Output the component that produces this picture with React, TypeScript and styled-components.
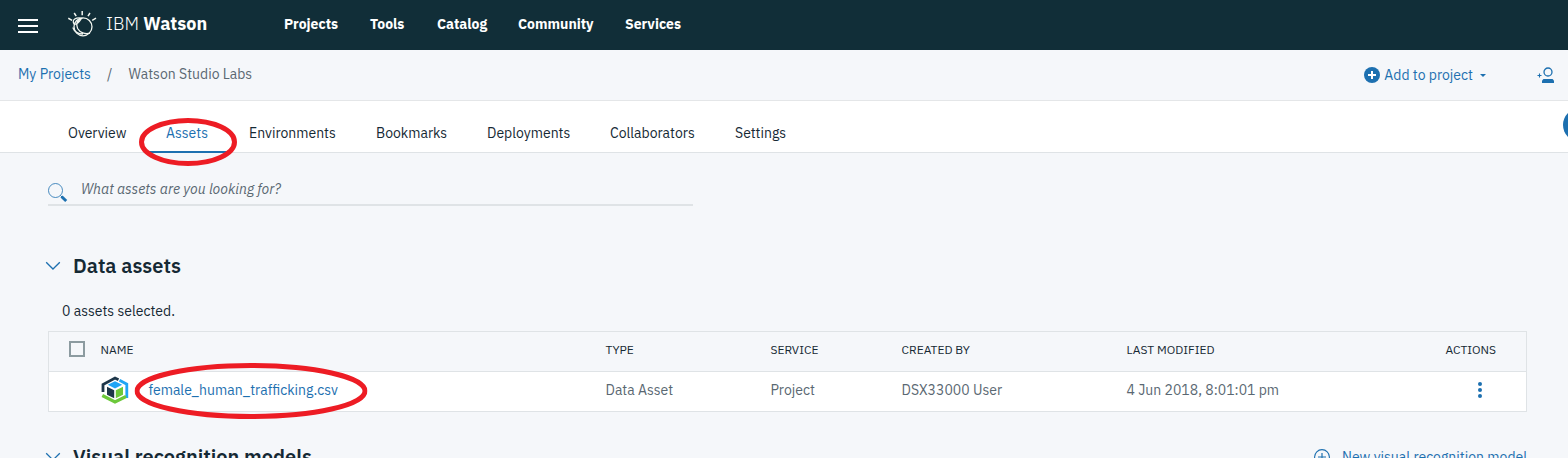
import React from 'react';
import styled, { createGlobalStyle } from 'styled-components';

const color = {
  header: '#112e38',
  page: '#f5f7fa',
  white: '#ffffff',
  ink: '#152934',
  muted: '#5a6872',
  link: '#1d70b0',
  line: '#dfe3e6',
  mark: '#ed1c24',
};

const GlobalStyle = createGlobalStyle`
  *, *::before, *::after { box-sizing: border-box; }
  body {
    margin: 0;
    background: ${color.page};
    color: ${color.ink};
    font-family: 'IBM Plex Sans', Roboto, 'Liberation Sans', sans-serif;
    font-size: 14px;
    line-height: 20px;
  }
  button, input { font: inherit; color: inherit; }
  a { text-decoration: none; color: inherit; }
`;

const Page = styled.div`
  position: relative;
  height: 100vh;
  overflow: hidden;
`;

const Header = styled.header`
  display: flex;
  align-items: center;
  height: 50px;
  padding: 0 18px 2px;
  background: ${color.header};
  color: ${color.white};
`;

const IconButton = styled.button`
  display: flex;
  align-items: center;
  justify-content: center;
  padding: 0;
  border: 0;
  background: none;
  color: inherit;
  cursor: pointer;
`;

const MenuButton = styled(IconButton)`
  width: 20px;
  height: 16px;
  margin: 4px 30px 0 0;
`;

const Brand = styled.a`
  display: flex;
  align-items: center;
  gap: 9px;
  width: 216px;
  font-size: 18px;
  font-weight: 300;
  line-height: 24px;

  strong { font-weight: 700; }
`;

const MainNav = styled.nav`
  display: flex;
`;

const NavLink = styled.a<{ $width: number }>`
  width: ${(p) => p.$width}px;
  font-weight: 700;
`;

const SubHeader = styled.div`
  display: flex;
  align-items: center;
  justify-content: space-between;
  height: 51px;
  padding: 0 13px 2px 18px;
  border-bottom: 1px solid #e4e6e8;
`;

const Breadcrumb = styled.nav`
  display: flex;
  gap: 16px;
  color: ${color.muted};

  a { color: ${color.link}; width: 73px; }
`;

const HeaderActions = styled.div`
  display: flex;
  align-items: center;
  gap: 51px;
  padding-top: 2px;
  color: ${color.link};
`;

const AddButton = styled(IconButton)`
  gap: 4px;

  svg:last-child { margin-left: 3px; }
`;

const Tabs = styled.nav`
  display: flex;
  height: 52px;
  padding-left: 48px;
  background: ${color.white};
  border-bottom: 1px solid ${color.line};
`;

const Tab = styled.a<{ $width: number; $active?: boolean }>`
  position: relative;
  width: ${(p) => p.$width}px;
  margin-bottom: -1px;
  padding: 22px 0 0 20px;
  line-height: 20px;
  border-bottom: 2px solid ${(p) => (p.$active ? color.link : 'transparent')};
  color: ${(p) => (p.$active ? color.link : color.ink)};
`;

const Mark = styled.svg`
  position: absolute;
  transform: translate(-50%, -50%);
  pointer-events: none;
  z-index: 1;
`;

const TabMark = styled(Mark)`
  top: 41px;
  left: 50%;
`;

const FileMark = styled(Mark)`
  top: 11px;
  left: 102px;
`;

const FloatingButton = styled(IconButton)`
  position: absolute;
  top: 108px;
  right: -29px;
  width: 34px;
  height: 34px;
  border-radius: 50%;
  background: ${color.link};
`;

const Content = styled.main`
  padding: 25px 41px 0 48px;
`;

const SearchBox = styled.label`
  display: flex;
  width: 645px;
  max-width: 100%;
  height: 28px;
  gap: 13px;
  border-bottom: 2px solid ${color.line};

  svg { flex: none; margin-top: 5px; }
`;

const SearchInput = styled.input`
  flex: 1;
  height: 22px;
  padding: 0;
  border: 0;
  outline: 0;
  background: none;

  &::placeholder {
    color: ${color.muted};
    font-style: italic;
    opacity: 1;
  }
`;

const SectionHead = styled.div`
  display: flex;
  align-items: center;
  justify-content: space-between;
  height: 28px;
`;

const FirstSectionHead = styled(SectionHead)`
  margin-top: 46px;
`;

const NextSectionHead = styled(SectionHead)`
  margin-top: 31px;
`;

const SectionTitle = styled.h2`
  display: flex;
  align-items: center;
  gap: 12px;
  margin: 0 0 0 -3px;
  font-size: 20px;
  font-weight: 600;
  line-height: 28px;
`;

const ToggleButton = styled(IconButton)`
  width: 16px;
  height: 24px;
  color: ${color.link};
`;

const NewLink = styled.a`
  display: flex;
  align-items: center;
  gap: 12px;
  color: ${color.link};
`;

const Selected = styled.p`
  margin: 21px 0 10px 14px;
`;

const AssetTable = styled.table`
  width: 100%;
  table-layout: fixed;
  border-collapse: collapse;
  border: 1px solid ${color.line};

  th, td {
    height: 40px;
    padding: 0 0 4px;
    text-align: left;
    vertical-align: middle;
    border-bottom: 1px solid ${color.line};
  }
  th {
    font-size: 12px;
    font-weight: 400;
  }
  td {
    background: ${color.white};
    color: ${color.muted};
  }
`;

const Col = styled.col<{ $width?: number }>`
  width: ${(p) => (p.$width ? `${p.$width}px` : 'auto')};
`;

const Checkbox = styled.input`
  appearance: none;
  display: block;
  width: 16px;
  height: 16px;
  margin: 0 0 2px 20px;
  border: 2px solid #8c9ba0;
`;

const AssetName = styled.div`
  display: flex;
  align-items: center;
  gap: 20px;
`;

const AssetLink = styled.a`
  position: relative;
  min-width: 191px;
  color: ${color.link};
`;

const RowMenu = styled(IconButton)`
  width: 16px;
  height: 20px;
  margin-left: 26px;
  color: ${color.link};
`;

const navItems = [
  { label: 'Projects', width: 86 },
  { label: 'Tools', width: 67 },
  { label: 'Catalog', width: 81 },
  { label: 'Community', width: 107 },
  { label: 'Services', width: 60 },
];

const tabItems = [
  { label: 'Overview', width: 98 },
  { label: 'Assets', width: 83, active: true },
  { label: 'Environments', width: 127 },
  { label: 'Bookmarks', width: 111 },
  { label: 'Deployments', width: 123 },
  { label: 'Collaborators', width: 125 },
  { label: 'Settings', width: 92 },
];

const WatsonLogo = () => (
  <svg width="29" height="28" viewBox="0 0 29 28" fill="none" stroke="#f2f6f0" strokeWidth="1.3" aria-hidden="true">
    <path d="M14.2 1v4.2M6.2 3l2 3.2M22 3l-2 3.200M.3 8.200l3.800 2.200M28 8.200l-3.800 2.200" strokeWidth="1.500" />
    <circle cx="15" cy="16.800" r="9" />
    <path d="M6.300 14.500C3 9.500 8 7 14.500 8.300M13.500 8C9 10 7.600 14.500 9.600 18.500c2.200 4 7.500 6 12.400 4.600M4.800 17.500c1.500 4 5.500 6.500 10.200 6.500M6.200 14c2.400.6 4.400-1.200 7-5.200" />
  </svg>
);

const MenuIcon = () => (
  <svg width="20" height="14" viewBox="0 0 20 14" fill="currentColor" aria-hidden="true">
    <path d="M0 0h20v2H0zM0 6h20v2H0zM0 12h20v2H0z" />
  </svg>
);

const AddFilledIcon = () => (
  <svg width="16" height="16" viewBox="0 0 16 16" aria-hidden="true">
    <circle cx="8" cy="8" r="8" fill="currentColor" />
    <path d="M8 4v8M4 8h8" stroke="#fff" strokeWidth="2" />
  </svg>
);

const CaretIcon = () => (
  <svg width="6" height="4" viewBox="0 0 6 4" fill="currentColor" aria-hidden="true">
    <path d="M0 1h6L3 4z" />
  </svg>
);

const AddUserIcon = () => (
  <svg width="18" height="16" viewBox="0 0 18 16" aria-hidden="true">
    <circle cx="11" cy="5" r="4" fill="none" stroke="currentColor" strokeWidth="1.3" />
    <path d="M5 16v-2.500L6.500 12h9l1.500 1.500V16z" fill="currentColor" />
    <path d="M2.500 6.500v4M.5 8.500h4" stroke="currentColor" strokeWidth="1.1" />
  </svg>
);

const SearchIcon = () => (
  <svg width="20" height="20" viewBox="0 0 20 20" fill="none" stroke="currentColor" color={color.link} aria-hidden="true">
    <circle cx="7.500" cy="7.500" r="7" strokeWidth=".8" />
    <path d="M12.500 12.500l2 2" strokeWidth="1" />
    <path d="M13.500 13.500l4.700 4.500" strokeWidth="3" />
  </svg>
);

const ChevronIcon = () => (
  <svg width="16" height="10" viewBox="0 0 16 10" fill="none" stroke="currentColor" strokeWidth="1.3" aria-hidden="true">
    <path d="M1.200 1.200L8 8l6.800-6.800" />
  </svg>
);

const AddOutlineIcon = () => (
  <svg width="16" height="16" viewBox="0 0 16 16" fill="none" stroke="currentColor" aria-hidden="true">
    <circle cx="8" cy="8" r="7.400" strokeWidth="1.100" />
    <path d="M8 4v8M4 8h8" strokeWidth="1.200" />
  </svg>
);

const DataAssetIcon = () => (
  <svg width="28" height="28" viewBox="0 0 28 28" fill="none" aria-hidden="true">
    <path d="M2 16V8.500L14 2l3.500 1.800" stroke="#1d3649" strokeWidth="2.800" />
    <path d="M18.500 4.300L25.800 8.200V22" stroke="#1fa5f5" strokeWidth="2.800" />
    <path d="M1.300 19.500L14 26l11-5.500" stroke="#6cc83a" strokeWidth="3.200" />
    <path d="M14 5.200l7.200 3.600L14 12.400 6.800 8.800z" fill="#1fa5f5" />
    <path d="M6 10.800l7.200 3.500v8L6 18.800z" fill="#1d3649" />
    <path d="M22 10.800l-7.200 3.500v8L22 18.800z" fill="#6cc83a" />
  </svg>
);

const OverflowIcon = () => (
  <svg width="4" height="16" viewBox="0 0 4 16" fill="currentColor" aria-hidden="true">
    <circle cx="2" cy="2" r="2" />
    <circle cx="2" cy="8" r="2" />
    <circle cx="2" cy="14" r="2" />
  </svg>
);

export default function App() {
  return (
    <Page>
      <GlobalStyle />
      <Header>
        <MenuButton aria-label="Menu"><MenuIcon /></MenuButton>
        <Brand href="#">
          <WatsonLogo />
          <span>IBM <strong>Watson</strong></span>
        </Brand>
        <MainNav>
          {navItems.map((item) => (
            <NavLink key={item.label} href="#" $width={item.width}>{item.label}</NavLink>
          ))}
        </MainNav>
      </Header>

      <SubHeader>
        <Breadcrumb>
          <a href="#">My Projects</a>
          <span>/</span>
          <span>Watson Studio Labs</span>
        </Breadcrumb>
        <HeaderActions>
          <AddButton>
            <AddFilledIcon />
            Add to project
            <CaretIcon />
          </AddButton>
          <IconButton aria-label="Add collaborator"><AddUserIcon /></IconButton>
        </HeaderActions>
      </SubHeader>

      <Tabs>
        {tabItems.map((tab) => (
          <Tab key={tab.label} href="#" $width={tab.width} $active={tab.active}>
            {tab.label}
            {tab.active && (
              <TabMark width="98" height="48" viewBox="0 0 98 48" fill="none" stroke={color.mark} strokeWidth="5" aria-hidden="true">
                <ellipse cx="49" cy="24" rx="46.500" ry="21.500" />
              </TabMark>
            )}
          </Tab>
        ))}
      </Tabs>
      <FloatingButton aria-label="Help" />

      <Content>
        <SearchBox>
          <SearchIcon />
          <SearchInput type="text" aria-label="Search assets" placeholder="What assets are you looking for?" />
        </SearchBox>

        <FirstSectionHead>
          <SectionTitle>
            <ToggleButton aria-label="Collapse data assets"><ChevronIcon /></ToggleButton>
            Data assets
          </SectionTitle>
        </FirstSectionHead>

        <Selected>0 assets selected.</Selected>

        <AssetTable>
          <colgroup>
            <Col $width={52} />
            <Col />
            <Col $width={165} />
            <Col $width={131} />
            <Col $width={225} />
            <Col $width={319} />
            <Col $width={81} />
          </colgroup>
          <thead>
            <tr>
              <th><Checkbox type="checkbox" aria-label="Select all assets" /></th>
              <th>NAME</th>
              <th>TYPE</th>
              <th>SERVICE</th>
              <th>CREATED BY</th>
              <th>LAST MODIFIED</th>
              <th>ACTIONS</th>
            </tr>
          </thead>
          <tbody>
            <tr>
              <td />
              <td>
                <AssetName>
                  <DataAssetIcon />
                  <AssetLink href="#">
                    female_human_trafficking.csv
                    <FileMark width="233" height="56" viewBox="0 0 233 56" fill="none" stroke={color.mark} strokeWidth="5" aria-hidden="true">
                      <ellipse cx="116.500" cy="28" rx="114" ry="25.500" />
                    </FileMark>
                  </AssetLink>
                </AssetName>
              </td>
              <td>Data Asset</td>
              <td>Project</td>
              <td>DSX33000 User</td>
              <td>4 Jun 2018, 8:01:01 pm</td>
              <td><RowMenu aria-label="Asset actions"><OverflowIcon /></RowMenu></td>
            </tr>
          </tbody>
        </AssetTable>

        <NextSectionHead>
          <SectionTitle>
            <ToggleButton aria-label="Collapse visual recognition models"><ChevronIcon /></ToggleButton>
            Visual recognition models
          </SectionTitle>
          <NewLink href="#">
            <AddOutlineIcon />
            New visual recognition model
          </NewLink>
        </NextSectionHead>
      </Content>
    </Page>
  );
}
